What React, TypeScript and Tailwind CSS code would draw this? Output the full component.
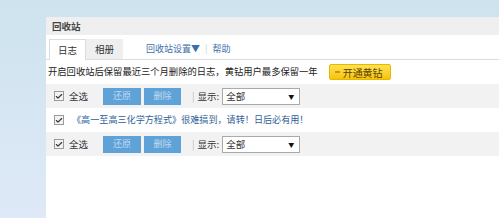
import { Check } from "lucide-react";

const font = { fontFamily: '"Noto Sans CJK SC", "Liberation Sans", sans-serif' };

const Box = () => (
  <span className="flex h-[10px] w-[10px] items-center justify-center border border-[#9a9a9a] bg-[#f4f4f4]">
    <Check size={9} strokeWidth={3.5} className="text-[#333]" />
  </span>
);

const ActionRow = () => (
  <div className="flex h-[24px] items-center bg-[#f2f2f2] pl-[8px] text-[9.5px] text-[#333]">
    <Box />
    <span className="ml-[5px] w-[34px]">全选</span>
    <span className="flex h-[17px] w-[38px] items-center justify-center bg-[#5ea2d8] text-[9px] text-white/60">
      还原
    </span>
    <span className="ml-[3px] flex h-[17px] w-[37px] items-center justify-center bg-[#5ea2d8] text-[9px] text-white/60">
      删除
    </span>
    <span className="ml-[11px] text-[#bbb]">|</span>
    <span className="ml-[3px]">显示:</span>
    <div className="ml-[3px] flex h-[17px] w-[78px] items-center justify-between border border-[#aaa] bg-white pl-[3px] pr-[5px]">
      <span>全部</span>
      <span className="text-[6px] text-[#111]">▼</span>
    </div>
  </div>
);

export default function App() {
  return (
    <div
      className="h-[218px] w-[499px] overflow-hidden bg-gradient-to-b from-[#cde3ee] to-[#dfe9f7] pt-[17px] pl-[46px]"
      style={font}
    >
      <div className="h-full bg-white">
        {/* title */}
        <div className="flex h-[18px] items-center bg-[#efefef] pl-[6px] text-[9.5px] font-bold text-[#444]">
          回收站
        </div>

        {/* tabs */}
        <div className="flex h-[25px] items-end border-b border-[#dcdcdc] pl-[3px] text-[9.5px]">
          <div className="-mb-px flex h-[21px] w-[37px] items-center justify-center border border-b-0 border-[#dcdcdc] bg-white text-[#333]">
            日志
          </div>
          <div className="flex h-[20px] w-[37px] items-center justify-center bg-[#efefef] text-[#333]">
            相册
          </div>
          <div className="ml-[23px] flex h-[20px] items-center text-[9px] text-[#3c6fa8]">
            <span>回收站设置▼</span>
            <span className="mx-[5px] text-[#ccc]">|</span>
            <span>帮助</span>
          </div>
        </div>

        {/* notice */}
        <div className="flex h-[24px] items-center pl-[2px] text-[9.3px] text-[#222]">
          <span>开启回收站后保留最近三个月删除的日志，黄钻用户最多保留一年</span>
          <span className="ml-[11px] flex h-[16px] w-[62px] items-center gap-[3px] rounded-[2px] border border-[#e6b800] bg-gradient-to-b from-[#ffe14d] to-[#f5c400] pl-[5px] text-[10px] text-[#5a4300]">
            <span className="h-[1.5px] w-[5px] bg-[#c89a00]" />
            开通黄钻
          </span>
        </div>

        <ActionRow />

        {/* item */}
        <div className="flex h-[24px] items-center pl-[8px] text-[9.1px] text-[#2f5f9a]">
          <Box />
          <span className="ml-[8px]">《高一至高三化学方程式》很难搞到，请转！日后必有用！</span>
        </div>

        <ActionRow />
      </div>
    </div>
  );
}
